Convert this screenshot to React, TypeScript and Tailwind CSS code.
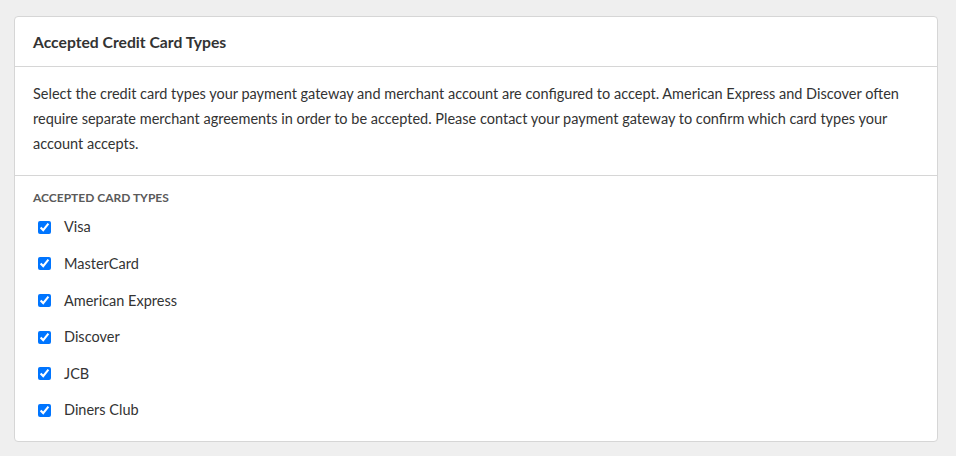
const cardTypes = ["Visa", "MasterCard", "American Express", "Discover", "JCB", "Diners Club"];

export default function App() {
  return (
    <div
      className="min-h-[456px] w-full bg-[#efefef] pt-4 pl-[14px] pr-[18px] text-[#333333]"
      style={{ fontFamily: 'Lato, "Noto Sans", sans-serif' }}
    >
      <div className="overflow-hidden rounded-[4px] border border-[#d6d6d6] bg-white">
        {/* Header */}
        <div className="flex h-[50px] items-center border-b border-[#d6d6d6] px-[18px]">
          <h2 className="text-[15.7px] font-bold leading-[22px] text-[#333333]">Accepted Credit Card Types</h2>
        </div>

        {/* Description */}
        <div className="border-b border-[#d6d6d6] px-[18px] pt-[14px] pb-[19px]">
          <p className="text-[14.5px] leading-[25px]">
            Select the credit card types your payment gateway and merchant account are configured to accept. American
            Express and Discover often require separate merchant agreements in order to be accepted. Please contact your
            payment gateway to confirm which card types your account accepts.
          </p>
        </div>

        {/* Card types */}
        <div className="px-[18px] pt-[14px] pb-[12px]">
          <div className="text-[12px] font-bold uppercase leading-[16px] text-[#5a5a5a]">Accepted Card Types</div>
          <div className="mt-[3px] flex flex-col">
            {cardTypes.map((t) => (
              <label key={t} className="flex h-[36.6px] items-center gap-[13px] pl-[5px] text-[14.5px]">
                <input type="checkbox" defaultChecked className="m-0 h-[13px] w-[13px] accent-[#0075ff]" />
                <span>{t}</span>
              </label>
            ))}
          </div>
        </div>
      </div>
    </div>
  );
}
